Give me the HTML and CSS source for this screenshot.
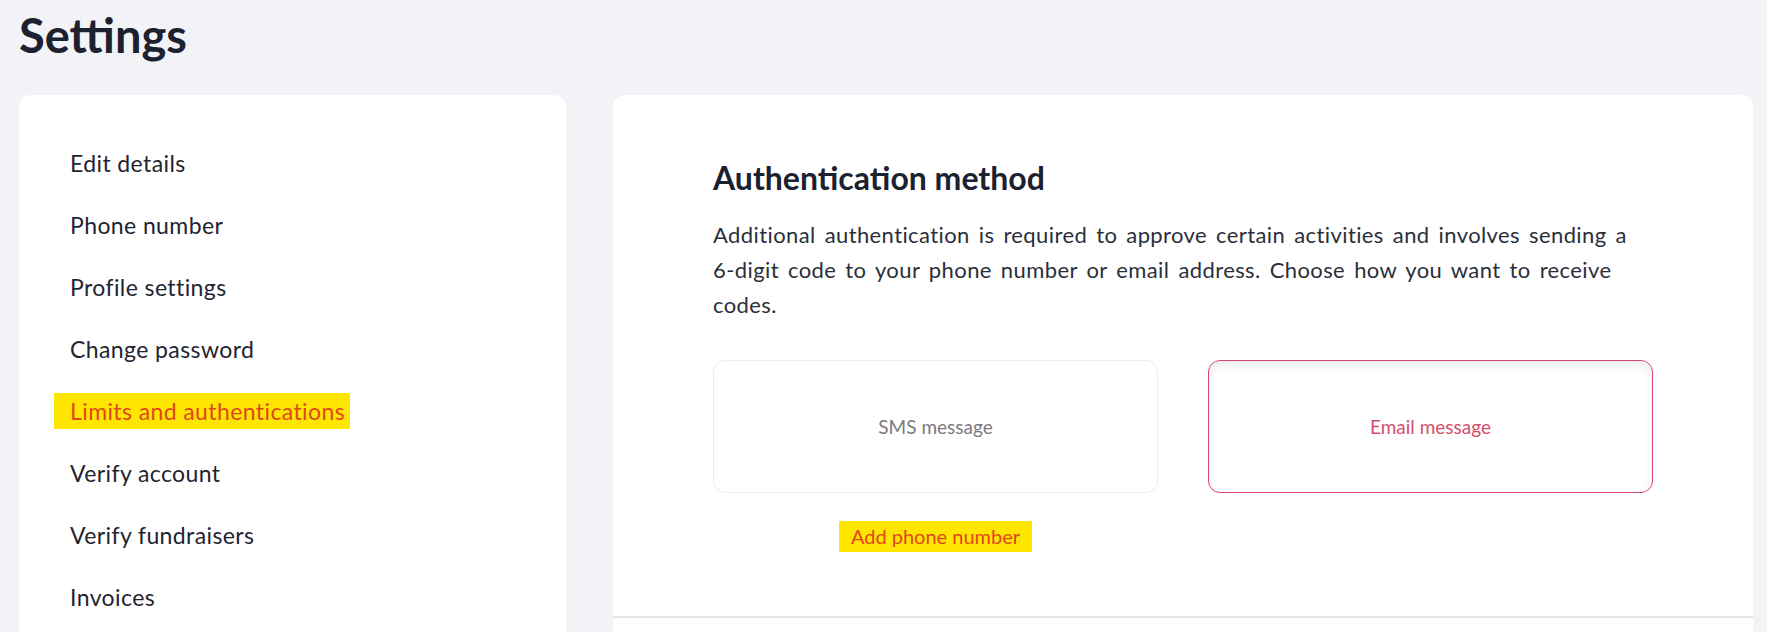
FILE: index.html
```html
<!DOCTYPE html>
<html lang="en">
<head>
  <meta charset="UTF-8" />
  <meta name="viewport" content="width=device-width, initial-scale=1" />
  <title>Settings</title>
  <link rel="stylesheet" href="styles.css">
</head>
<body>
  <div class="page">
    <h1>Settings</h1>

    <div class="layout">
      <nav class="card side-nav">
        <a href="#">Edit details</a>
        <a href="#">Phone number</a>
        <a href="#">Profile settings</a>
        <a href="#">Change password</a>
        <a href="#" class="active"><span class="mark">Limits and authentications</span></a>
        <a href="#">Verify account</a>
        <a href="#">Verify fundraisers</a>
        <a href="#">Invoices</a>
      </nav>

      <main class="card content">
        <section class="auth">
          <h2>Authentication method</h2>
          <p>Additional authentication is required to approve certain activities and involves sending a 6&#8209;digit code to your phone number or email address. Choose how you want to receive codes.</p>

          <div class="options">
            <div class="option-col">
              <button class="option">SMS message</button>
              <a href="#" class="add-phone">Add phone number</a>
            </div>
            <div class="option-col">
              <button class="option selected">Email message</button>
            </div>
          </div>
        </section>
      </main>
    </div>
  </div>
</body>
</html>
```

FILE: styles.css
```css
body {
  margin: 0;
  background-color: #f2f3f7;
  color: #1f2430;
  font-family: Lato, 'Noto Sans', sans-serif;
  overflow: hidden;
}
.page {
  padding: 0 14px 0 19px;
}
h1 {
  margin: 0;
  padding-top: 8px;
  font-size: 47px;
  line-height: 54px;
  font-weight: 700;
  color: #1c2130;
}
.layout {
  display: grid;
  grid-template-columns: 547px 1fr;
  gap: 47px;
  margin-top: 33px;
}
.card {
  background-color: #fff;
  border-radius: 12px;
  min-height: 620px;
}
.side-nav {
  display: flex;
  flex-direction: column;
  padding: 37px 0 0 51px;
}
.side-nav a {
  display: block;
  line-height: 62px;
  font-size: 23px;
  letter-spacing: 0.4px;
  color: #1f2430;
  text-decoration: none;
}
.side-nav a.active {
  color: #e0461d;
}
.side-nav .mark {
  background-color: #ffe600;
  padding: 4px 5px 4px 16px;
  margin-left: -16px;
}
.auth {
  padding: 65px 100px 64px;
  border-bottom: 2px solid #e3e5e9;
}
h2 {
  margin: 0;
  font-size: 32px;
  line-height: 36px;
  font-weight: 700;
  color: #1c2130;
}
.auth p {
  margin: 21px 0 0;
  font-size: 22px;
  line-height: 35px;
  letter-spacing: 0.4px;
  word-spacing: 3px;
  color: #2a2f3a;
}
.options {
  display: grid;
  grid-template-columns: 1fr 1fr;
  gap: 50px;
  margin-top: 38px;
}
.option-col {
  display: flex;
  flex-direction: column;
  align-items: center;
}
.option {
  width: 100%;
  height: 133px;
  background-color: #fff;
  border: 1px solid #ececee;
  border-radius: 12px;
  font-family: inherit;
  font-size: 19px;
  color: #7a7a7e;
  cursor: pointer;
}
.option.selected {
  border-color: #d4496c;
  color: #d64d6b;
  box-shadow: inset 0 5px 10px rgba(0,0,0,0.07);
}
.add-phone {
  margin-top: 28px;
  background-color: #ffe600;
  padding: 0 12px;
  line-height: 31px;
  font-size: 20px;
  color: #e0461d;
  text-decoration: none;
}
```
